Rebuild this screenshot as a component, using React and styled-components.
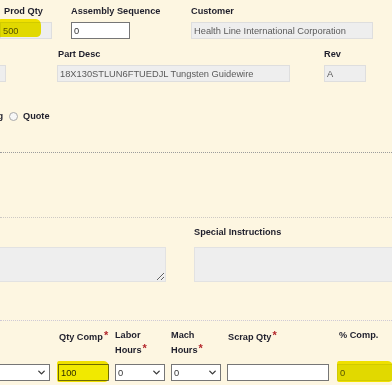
import React from 'react'
import styled, { createGlobalStyle } from 'styled-components'
import { ChevronDown } from 'lucide-react'

const GlobalStyle = createGlobalStyle`
  html, body { margin: 0; padding: 0; background: #fdf6e1; }
  body { font-family: "Liberation Sans", Arial, sans-serif; overflow: hidden; }
`

const Page = styled.div`
  width: 392px;
  height: 385px;
  overflow: hidden;
  background: #fdf6e1;
  padding-top: 4px;
  box-sizing: border-box;
`
const Row = styled.div`
  display: flex;
  align-items: ${p => p.$align || 'flex-start'};
  margin-top: ${p => p.$mt || 0}px;
  height: ${p => (p.$h ? `${p.$h}px` : 'auto')};
`
const Field = styled.div`
  flex: none;
  width: ${p => p.$w}px;
  margin-left: ${p => p.$ml || 0}px;
  display: flex;
  flex-direction: column;
  gap: ${p => (p.$gap === undefined ? 4 : p.$gap)}px;
`
const Label = styled.label`
  display: block;
  font-weight: bold;
  font-size: 9.2px;
  line-height: ${p => p.$lh || 14}px;
  height: ${p => p.$h || 14}px;
  padding-left: ${p => p.$pl || 0}px;
  padding-top: ${p => p.$pt || 0}px;
  padding-right: ${p => p.$pr || 0}px;
  text-align: ${p => p.$right ? 'right' : 'left'};
  color: #1f1f2c;
  white-space: nowrap;
  box-sizing: border-box;
`
const Req = styled.span`
  color: #b3262b;
  font-size: 11px;
  vertical-align: top;
  line-height: 10px;
  margin-left: 1px;
`
const Box = styled.div`
  position: relative;
  width: 100%;
`
const TextInput = styled.input`
  display: block;
  box-sizing: border-box;
  width: 100%;
  height: 17px;
  margin: 0;
  padding: 0 2px;
  font-family: "Liberation Sans", Arial, sans-serif;
  font-size: 9.3px;
  background: ${p => (p.$grey ? '#eeeeee' : '#ffffff')};
  border: 1px solid ${p => (p.$grey ? '#dedede' : '#767676')};
  color: ${p => (p.$grey ? '#5a5a5a' : '#333')};
  outline: none;
`
const Select = styled.select`
  display: block;
  box-sizing: border-box;
  width: 100%;
  height: 17px;
  margin: 0;
  padding: 0 2px;
  appearance: none;
  font-family: "Liberation Sans", Arial, sans-serif;
  font-size: 9.3px;
  color: #333;
  background: #fff;
  border: 1px solid #767676;
  border-radius: 0;
  outline: none;
`
const Chevron = styled(ChevronDown)`
  position: absolute;
  right: 3px;
  top: 3px;
  color: #3a3a3a;
  pointer-events: none;
`
const Marker = styled.span`
  position: absolute;
  left: ${p => p.$l}px;
  top: ${p => p.$t}px;
  width: ${p => p.$w}px;
  height: ${p => p.$h}px;
  background: #f1e900;
  mix-blend-mode: multiply;
  border-radius: 2px 5px 4px 2px / 3px 6px 5px 3px;
  pointer-events: none;
`
const CutText = styled.span`
  flex: none;
  width: 40px;
  margin-left: -37px;
  text-align: right;
  font-weight: bold;
  font-size: 9.2px;
  color: #1f1f2c;
  overflow: hidden;
  white-space: nowrap;
`
const Radio = styled.input`
  appearance: none;
  flex: none;
  width: 9px;
  height: 9px;
  margin: 0 0 0 6px;
  border: 1px solid #a9a9a9;
  border-radius: 50%;
  background: #f7f7f7;
  box-sizing: border-box;
`
const RadioText = styled.span`
  margin-left: 5px;
  font-weight: bold;
  font-size: 9.2px;
  color: #1f1f2c;
`
const Divider = styled.div`
  margin-top: ${p => p.$mt}px;
  border-top: 1px dotted ${p => p.$color};
  height: 0;
`
const Area = styled.textarea`
  display: block;
  box-sizing: border-box;
  width: 100%;
  height: 35px;
  margin: 0;
  background: #eeeeee;
  border: 1px solid #e2e2e2;
  resize: both;
  outline: none;
`

const SelectBox = ({ value }) => (
  <Box>
    <Select defaultValue={value}>
      <option>{value}</option>
    </Select>
    <Chevron size={11} strokeWidth={3} />
  </Box>
)

export default function App() {
  return (
    <Page>
      <GlobalStyle />
      <Row>
        <Field $w={52}>
          <Label $pl={4}>Prod Qty</Label>
          <Box>
            <TextInput $grey readOnly value="500" />
            <Marker $l={-1} $t={-3} $w={42} $h={18} />
          </Box>
        </Field>
        <Field $w={59} $ml={19}>
          <Label>Assembly Sequence</Label>
          <TextInput defaultValue="0" />
        </Field>
        <Field $w={182} $ml={61}>
          <Label>Customer</Label>
          <TextInput $grey readOnly value="Health Line International Corporation" />
        </Field>
      </Row>

      <Row $mt={8}>
        <Field $w={46} $ml={-40}>
          <Label>&nbsp;</Label>
          <TextInput $grey readOnly value="" />
        </Field>
        <Field $w={233} $ml={51}>
          <Label $pl={1}>Part Desc</Label>
          <TextInput $grey readOnly value="18X130STLUN6FTUEDJL Tungsten Guidewire" />
        </Field>
        <Field $w={42} $ml={34}>
          <Label>Rev</Label>
          <TextInput $grey readOnly value="A" />
        </Field>
      </Row>

      <Row $mt={27} $h={14} $align="center">
        <CutText>Tooling</CutText>
        <Radio type="radio" name="kind" />
        <RadioText>Quote</RadioText>
      </Row>

      <Divider $mt={29} $color="#9c9c9c" />
      <Divider $mt={64} $color="#cdc9c4" />

      <Row $mt={7}>
        <Field $w={206} $ml={-40} $gap={8}>
          <Label>&nbsp;</Label>
          <Area />
        </Field>
        <Field $w={230} $ml={28} $gap={8}>
          <Label>Special Instructions</Label>
          <Area />
        </Field>
      </Row>

      <Divider $mt={38} $color="#cfc9d6" />

      <Row $mt={7}>
        <Field $w={90} $ml={-40} $gap={0}>
          <Label $h={36} $lh={15} $pt={2} $right $pr={50}>
            <Req>*</Req>
          </Label>
          <SelectBox value="" />
        </Field>
        <Field $w={51} $ml={8} $gap={0}>
          <Label $h={36} $lh={15} $pt={2} $pl={1}>
            Qty Comp<Req>*</Req>
          </Label>
          <Box>
            <TextInput defaultValue="100" />
            <Marker $l={-1} $t={-3} $w={52} $h={21} />
          </Box>
        </Field>
        <Field $w={50} $ml={6} $gap={0}>
          <Label $h={36} $lh={15}>
            Labor<br />Hours<Req>*</Req>
          </Label>
          <SelectBox value="0" />
        </Field>
        <Field $w={50} $ml={6} $gap={0}>
          <Label $h={36} $lh={15}>
            Mach<br />Hours<Req>*</Req>
          </Label>
          <SelectBox value="0" />
        </Field>
        <Field $w={102} $ml={6} $gap={0}>
          <Label $h={36} $lh={15} $pt={2} $pl={1}>
            Scrap Qty<Req>*</Req>
          </Label>
          <TextInput defaultValue="" />
        </Field>
        <Field $w={60} $ml={8} $gap={0}>
          <Label $h={36} $lh={15} $pl={2}>% Comp.</Label>
          <Box>
            <TextInput $grey readOnly value="0" />
            <Marker $l={0} $t={-3} $w={56} $h={21} />
          </Box>
        </Field>
      </Row>
    </Page>
  )
}
